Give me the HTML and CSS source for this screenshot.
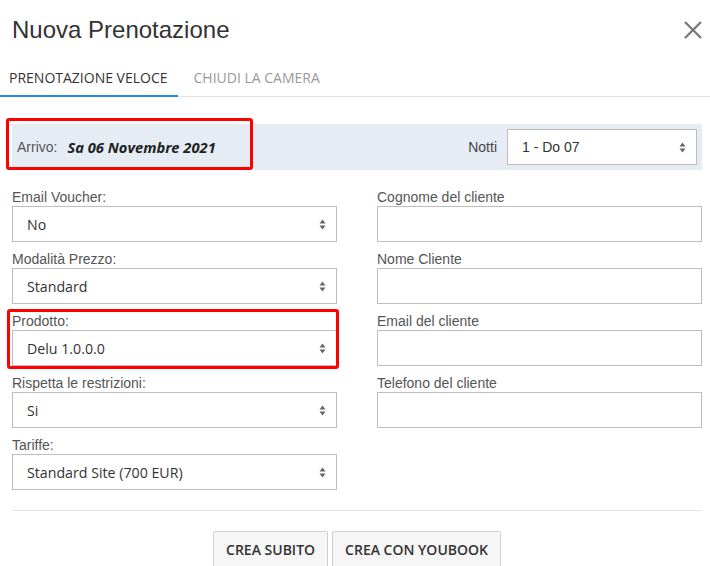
FILE: index.html
```html
<!DOCTYPE html>
<html lang="it">
<head>
<meta charset="utf-8">
<title>Nuova Prenotazione</title>
<link rel="stylesheet" href="styles.css">
</head>
<body>
<div class="modal">
  <header class="header">
    <h1 class="title">Nuova Prenotazione</h1>
    <svg class="close" width="20" height="20" viewBox="0 0 20 20"><path d="M2 2 L18 18 M18 2 L2 18" stroke="#7a7a7a" stroke-width="2.4" fill="none"/></svg>
  </header>
  <nav class="tabs">
    <div class="tab active">PRENOTAZIONE VELOCE</div>
    <div class="tab">CHIUDI LA CAMERA</div>
  </nav>
  <div class="content">
    <div class="band">
      <div class="arrival">
        <span class="arr-label">Arrivo:</span>
        <span class="arr-date">Sa 06 Novembre 2021</span>
        <div class="mark mark-arrival"></div>
      </div>
      <div class="nights">
        <span class="nights-label">Notti</span>
        <div class="select select-nights"><span class="sans">1 - Do 07</span><svg class="arrows" width="7" height="11" viewBox="0 0 7 11"><path d="M3.5 0.5 L6.5 4.5 L0.5 4.5 Z M0.5 6.5 L6.5 6.5 L3.5 10.5 Z" fill="#666"/></svg></div>
      </div>
    </div>
    <div class="grid">
      <div class="col">
        <div class="group">
          <label class="label">Email Voucher:</label>
          <div class="select"><span>No</span><svg class="arrows" width="7" height="11" viewBox="0 0 7 11"><path d="M3.5 0.5 L6.5 4.5 L0.5 4.5 Z M0.5 6.5 L6.5 6.5 L3.5 10.5 Z" fill="#666"/></svg></div>
        </div>
        <div class="group">
          <label class="label">Modalità Prezzo:</label>
          <div class="select"><span>Standard</span><svg class="arrows" width="7" height="11" viewBox="0 0 7 11"><path d="M3.5 0.5 L6.5 4.5 L0.5 4.5 Z M0.5 6.5 L6.5 6.5 L3.5 10.5 Z" fill="#666"/></svg></div>
        </div>
        <div class="group">
          <label class="label">Prodotto:</label>
          <div class="select"><span>Delu 1.0.0.0</span><svg class="arrows" width="7" height="11" viewBox="0 0 7 11"><path d="M3.5 0.5 L6.5 4.5 L0.5 4.5 Z M0.5 6.5 L6.5 6.5 L3.5 10.5 Z" fill="#666"/></svg></div>
          <div class="mark mark-product"></div>
        </div>
        <div class="group">
          <label class="label">Rispetta le restrizioni:</label>
          <div class="select"><span>Si</span><svg class="arrows" width="7" height="11" viewBox="0 0 7 11"><path d="M3.5 0.5 L6.5 4.5 L0.5 4.5 Z M0.5 6.5 L6.5 6.5 L3.5 10.5 Z" fill="#666"/></svg></div>
        </div>
        <div class="group">
          <label class="label">Tariffe:</label>
          <div class="select"><span>Standard Site (700 EUR)</span><svg class="arrows" width="7" height="11" viewBox="0 0 7 11"><path d="M3.5 0.5 L6.5 4.5 L0.5 4.5 Z M0.5 6.5 L6.5 6.5 L3.5 10.5 Z" fill="#666"/></svg></div>
        </div>
      </div>
      <div class="col">
        <div class="group">
          <label class="label">Cognome del cliente</label>
          <div class="input"></div>
        </div>
        <div class="group">
          <label class="label">Nome Cliente</label>
          <div class="input"></div>
        </div>
        <div class="group">
          <label class="label">Email del cliente</label>
          <div class="input"></div>
        </div>
        <div class="group">
          <label class="label">Telefono del cliente</label>
          <div class="input"></div>
        </div>
      </div>
    </div>
    <hr class="divider">
    <div class="actions">
      <button class="btn">CREA SUBITO</button>
      <button class="btn">CREA CON YOUBOOK</button>
    </div>
  </div>
</div>
</body>
</html>
```
FILE: styles.css
```css
* { box-sizing: border-box; }
html, body { margin: 0; padding: 0; background: #fff; }
body { font-family: "Liberation Sans", Arial, sans-serif; color: #333; overflow: hidden; }

.header {
  display: flex;
  justify-content: space-between;
  align-items: center;
  padding: 16px 7px 16px 12px;
  height: 60px;
}
.title {
  margin: 0;
  font-size: 24px;
  line-height: 28px;
  font-weight: normal;
  color: #333;
}
.close { display: block; }

.tabs {
  display: flex;
  gap: 7px;
  border-bottom: 1px solid #e3e3e3;
  height: 37px;
}
.tab {
  font-family: "Open Sans", sans-serif;
  font-size: 14px;
  line-height: 18px;
  padding: 9px 10px 8px 9px;
  color: #9a9a9a;
  height: 37px;
}
.tab.active {
  color: #333;
  border-bottom: 2px solid #2a88e0;
}

.content { padding: 27px 8px 0 12px; }

.band {
  position: relative;
  display: flex;
  justify-content: space-between;
  align-items: center;
  height: 46px;
  padding: 5px;
  background: #e6ecf4;
}
.arrival { display: flex; align-items: center; gap: 10px; }
.arr-label { font-size: 14px; color: #555; }
.arr-date {
  font-family: "Open Sans", sans-serif;
  font-weight: 700;
  font-style: italic;
  font-size: 14.7px;
  color: #222;
}
.nights { display: flex; align-items: center; gap: 10px; }
.nights-label { font-size: 14px; color: #444; }

.mark {
  position: absolute;
  border: 3px solid #f00;
  border-radius: 3px;
  pointer-events: none;
}
.mark-arrival { left: -6px; top: -6px; width: 247px; height: 52px; }
.mark-product { left: -5px; top: -3px; width: 332px; height: 60px; }

.grid {
  display: grid;
  grid-template-columns: 325px 325px;
  column-gap: 40px;
  margin-top: 18px;
}
.group { position: relative; margin-bottom: 8px; }
.label {
  display: block;
  font-size: 14px;
  line-height: 18px;
  color: #555;
}
.select, .input {
  height: 36px;
  border: 1px solid #bdbdbd;
  background: #fff;
}
.select {
  display: flex;
  align-items: center;
  justify-content: space-between;
  padding: 0 10px 0 14px;
  font-family: "Open Sans", sans-serif;
  font-size: 14.2px;
  color: #333;
}
.select .sans { font-family: "Liberation Sans", Arial, sans-serif; font-size: 14px; }
.select-nights { width: 190px; }
.arrows { display: block; }

.divider {
  border: 0;
  border-top: 1px solid #e5e5e5;
  margin: 12px 0 0;
}
.actions {
  display: flex;
  justify-content: center;
  gap: 4px;
  margin-top: 20px;
}
.btn {
  font-family: "Open Sans", sans-serif;
  font-weight: 600;
  font-size: 14px;
  line-height: 20px;
  color: #333;
  background: #f6f6f6;
  border: 1px solid #cfcfcf;
  border-radius: 2px;
  padding: 8px 12px;
}
```
